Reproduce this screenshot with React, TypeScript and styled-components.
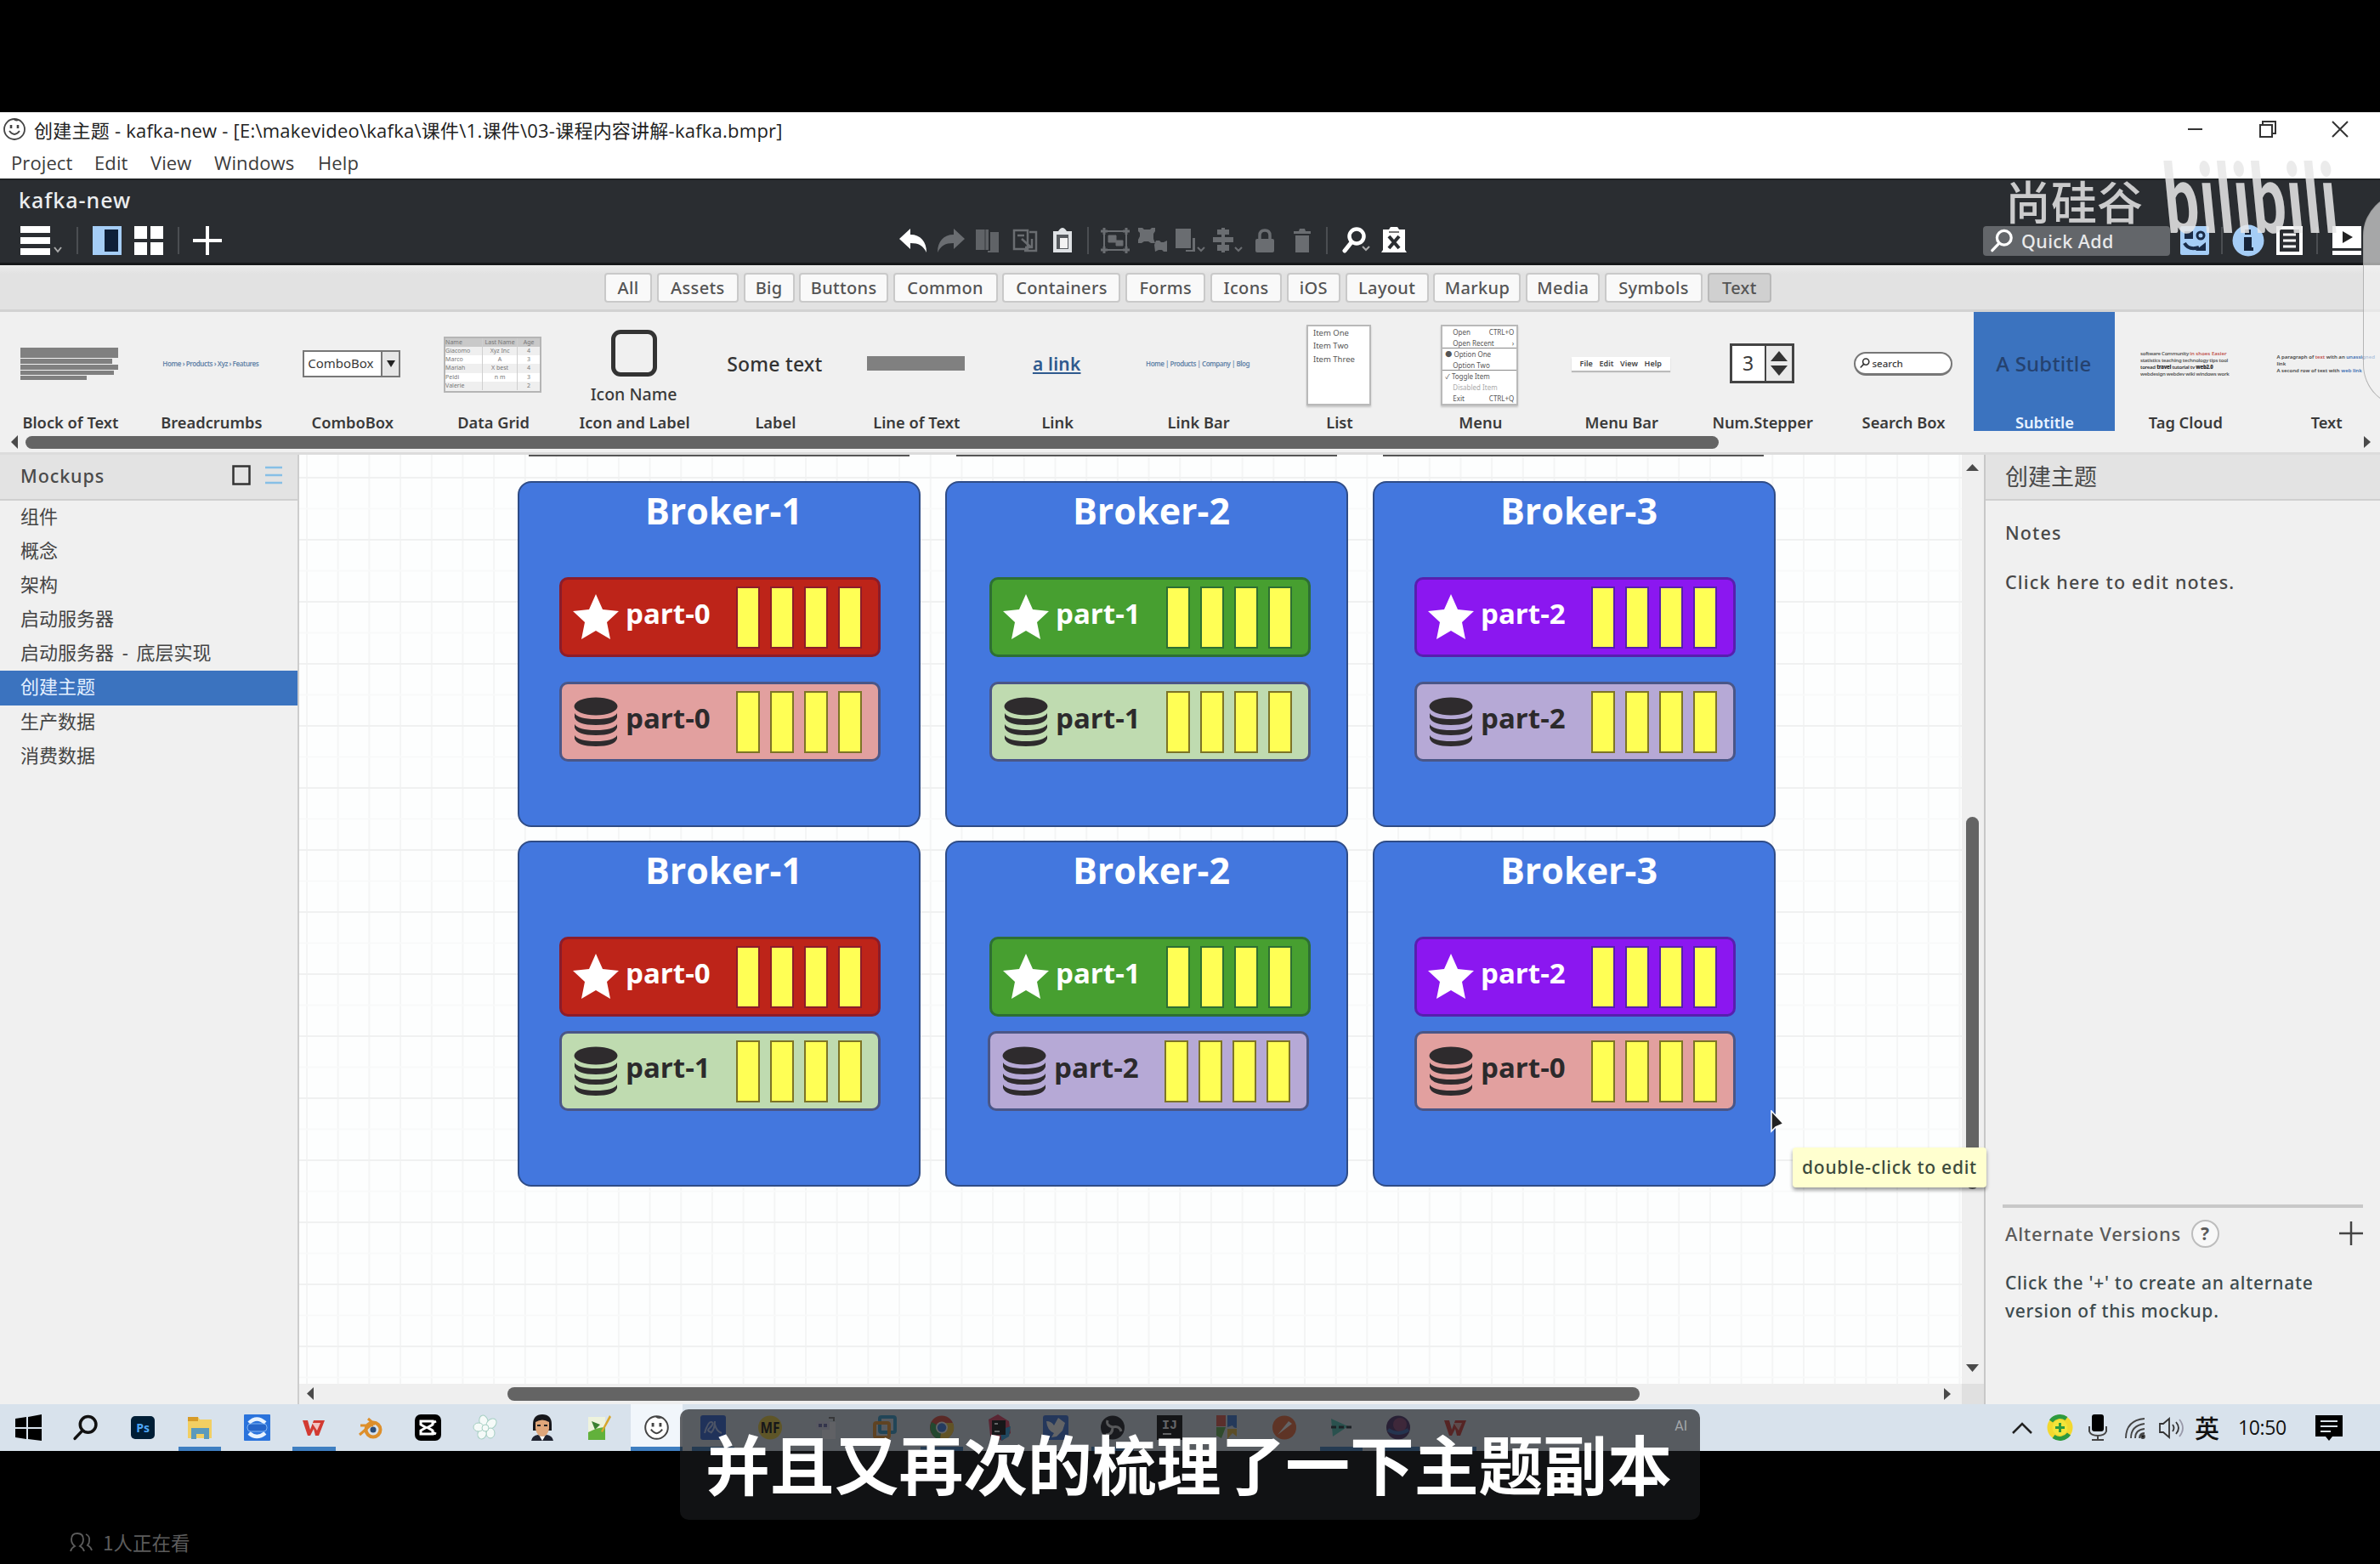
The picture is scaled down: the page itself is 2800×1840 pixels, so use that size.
import React from "react";
import styled, { createGlobalStyle, css } from "styled-components";

const GlobalStyle = createGlobalStyle`
  html, body { margin: 0; padding: 0; background: #000; }
  * { box-sizing: border-box; }
  svg { display: block; flex: none; }
`;

const ui = `"Noto Sans", "Noto Sans CJK SC", sans-serif`;
const segoe = `"Open Sans", "Noto Sans CJK SC", sans-serif`;

/* ---------- page shell ---------- */

const Stage = styled.div`
  position: relative;
  width: 2800px;
  height: 1840px;
  overflow: hidden;
  background: #000;
  display: flex;
  flex-direction: column;
  font-family: ${ui};
  color: #3c3c3c;
  white-space: nowrap;
`;

const Letterbox = styled.div`
  height: 132px;
  flex: none;
`;

/* ---------- title and menus ---------- */

const TitleBar = styled.header`
  height: 42px;
  flex: none;
  background: #fff;
  display: flex;
  align-items: center;
  padding: 0 0 2px 3px;
  gap: 9px;
  font-family: ${segoe};
  font-size: 22px;
  color: #222;
`;

const TitleText = styled.span`
  flex: 1;
  letter-spacing: 0.24px;
`;

const WindowButtons = styled.div`
  display: flex;
  align-items: center;
  gap: 65px;
  padding-right: 37px;
`;

const MenuBar = styled.nav`
  height: 36px;
  flex: none;
  background: #fff;
  display: flex;
  align-items: center;
  gap: 25px;
  padding: 0 0 2px 13px;
  font-family: ${segoe};
  font-size: 22px;
  letter-spacing: 0.1px;
  color: #3c3c3c;
`;

const MenuEntry = styled.span<{ $w: number }>`
  width: ${(p) => p.$w}px;
`;

/* ---------- dark toolbar ---------- */

const DarkBar = styled.div`
  height: 102px;
  flex: none;
  background: #2a2d31;
  border-bottom: 3px solid #16181a;
  border-top: 2px solid #1f2224;
  display: flex;
  flex-direction: column;
`;

const ProjectName = styled.div`
  height: 47px;
  line-height: 46px;
  padding-left: 22px;
  font-size: 25px;
  font-weight: 500;
  letter-spacing: 1px;
  color: #eceeef;
`;

const ToolRow = styled.div`
  height: 48px;
  display: flex;
  align-items: center;
  position: relative;
`;

const ToolSide = styled.div<{ $w: number }>`
  width: ${(p) => p.$w}px;
  display: flex;
  align-items: center;
  padding-left: 24px;
`;

const ToolCell = styled.div<{ $w?: number }>`
  width: ${(p) => p.$w ?? 44}px;
  height: 40px;
  display: flex;
  align-items: center;
  justify-content: center;
`;

const Divider = styled.i<{ $l?: number; $r?: number }>`
  width: 2px;
  height: 32px;
  background: #4b4e52;
  margin-left: ${(p) => p.$l ?? 0}px;
  margin-right: ${(p) => p.$r ?? 0}px;
`;

const Gap = styled.span<{ $w: number }>`
  width: ${(p) => p.$w}px;
  flex: none;
`;

const QuickAdd = styled.div`
  width: 220px;
  height: 35px;
  border-radius: 4px;
  background: #63666a;
  display: flex;
  align-items: center;
  padding-left: 8px;
  gap: 9px;
  font-size: 21.5px;
  font-weight: 500;
  letter-spacing: 0.4px;
  color: #e9eaeb;
`;

/* ---------- category tabs ---------- */

const TabBar = styled.div`
  height: 55px;
  flex: none;
  background: linear-gradient(#ececec, #e2e2e2 10px);
  border-bottom: 3px solid #d2d2d2;
  display: flex;
  align-items: flex-start;
  gap: 5.8px;
  padding: 9px 0 0 711px;
`;

const Tab = styled.span<{ $w: number; $on?: boolean }>`
  width: ${(p) => p.$w}px;
  height: 35px;
  border-radius: 4px;
  border: 2px solid #c9c9c9;
  background: ${(p) => (p.$on ? "#d0d0d0" : "#f9f9f9")};
  ${(p) => p.$on && css`border-color: #b9b9b9;`}
  font-size: 20px;
  font-weight: 500;
  letter-spacing: 0.35px;
  line-height: 31px;
  text-align: center;
  color: #555;
`;

/* ---------- control library ---------- */

const Library = styled.section`
  height: 168px;
  flex: none;
  background: #f0f0f0;
  border-bottom: 3px solid #dcdcdc;
  overflow: hidden;
`;

const Shelf = styled.div`
  height: 141px;
  display: flex;
`;

const Item = styled.div<{ $on?: boolean }>`
  width: 165.9px;
  height: 140px;
  flex: none;
  background: ${(p) => (p.$on ? "#3b73bf" : "transparent")};
  color: ${(p) => (p.$on ? "#e8f2ff" : "#3a3a3a")};
  display: flex;
  flex-direction: column;
  align-items: center;
`;

const Preview = styled.div`
  height: 121px;
  width: 100%;
  padding-right: 2px;
  display: flex;
  align-items: center;
  justify-content: center;
`;

const ItemLabel = styled.div`
  height: 18px;
  line-height: 18px;
  font-size: 18.3px;
  font-weight: 600;
  letter-spacing: 0;
`;

const Lines = styled.div`
  width: 115px;
  display: flex;
  flex-direction: column;
  gap: 1px;
`;

const GreyLine = styled.i<{ $w: number; $h?: number }>`
  width: ${(p) => p.$w}px;
  height: ${(p) => p.$h ?? 6}px;
  background: #808080;
`;

const Tiny = styled.span<{ $c?: string; $s?: number; $ls?: number }>`
  font-size: ${(p) => p.$s ?? 8}px;
  line-height: 1;
  font-weight: 600;
  color: ${(p) => p.$c ?? "#6484a8"};
  letter-spacing: ${(p) => p.$ls ?? 0}px;
`;

const Combo = styled.div`
  width: 115px;
  height: 32px;
  border: 2px solid #777;
  background: #fff;
  display: flex;
  align-items: stretch;
  font-size: 15px;
  line-height: 27px;
  padding-left: 4px;
  justify-content: space-between;
`;

const ComboArrow = styled.i`
  width: 21px;
  border-left: 2px solid #777;
  background: #e6e6e6;
  display: flex;
  align-items: center;
  justify-content: center;
`;

const Grid = styled.div`
  width: 115px;
  height: 66px;
  margin-top: 2px;
  border: 2px solid #b5b5b5;
  display: grid;
  grid-template-columns: 43px 41px 1fr;
  grid-template-rows: repeat(6, 1fr);
`;

const GridCell = styled.span<{ $head?: boolean; $alt?: boolean; $first?: boolean }>`
  font-size: 7px;
  line-height: 10px;
  overflow: hidden;
  text-align: ${(p) => (p.$first ? "left" : "center")};
  color: #777;
  border-left: ${(p) => (p.$first ? "none" : "1px solid #cfcfcf")};
  background: ${(p) => (p.$head ? "#c9c9c9" : p.$alt ? "#efefef" : "#fff")};
`;

const IconAndName = styled.div`
  display: flex;
  flex-direction: column;
  align-items: center;
  gap: 8px;
  font-size: 19.5px;
  font-weight: 500;
  line-height: 26px;
  padding-top: 10px;
`;

const RoundSquare = styled.i`
  width: 54px;
  height: 55px;
  border: 5px solid #333;
  border-radius: 11px;
`;

const BigText = styled.span<{ $c?: string; $link?: boolean; $s?: number }>`
  font-size: ${(p) => p.$s ?? 23}px;
  color: ${(p) => p.$c ?? "#333"};
  font-weight: ${(p) => (p.$link ? 600 : 500)};
  text-decoration: ${(p) => (p.$link ? "underline" : "none")};
  letter-spacing: 0.2px;
`;

const Sheet = styled.div<{ $w: number }>`
  width: ${(p) => p.$w}px;
  height: 95px;
  background: #fff;
  border: 2px solid #b9b9b9;
  box-shadow: 0 2px 2px #c4c4c4;
  display: flex;
  flex-direction: column;
  margin-top: 3px;
`;

const SheetRow = styled.div<{ $rule?: boolean; $c?: string; $h: number; $s: number; $l: number }>`
  height: ${(p) => p.$h}px;
  line-height: ${(p) => p.$h}px;
  font-size: ${(p) => p.$s}px;
  padding: 0 3px 0 ${(p) => p.$l}px;
  display: flex;
  justify-content: space-between;
  color: ${(p) => p.$c ?? "#555"};
  border-bottom: ${(p) => (p.$rule ? "1px solid #888" : "none")};
`;

const Strip = styled.div`
  width: 116px;
  height: 16px;
  background: #fff;
  box-shadow: 0 2px 1px #bbb;
  display: flex;
  align-items: center;
  justify-content: space-around;
  padding: 0 6px;
`;

const Stepper = styled.div`
  width: 76px;
  height: 47px;
  border: 3px solid #444;
  background: #fff;
  display: flex;
  font-size: 23px;
  line-height: 40px;
  text-align: center;
`;

const StepperValue = styled.span`
  flex: 1;
`;

const StepperArrows = styled.i`
  width: 32px;
  border-left: 2px solid #444;
  background: #e9e9e9;
  display: flex;
  flex-direction: column;
  align-items: center;
  justify-content: center;
  gap: 5px;
`;

const SearchPill = styled.div`
  width: 116px;
  height: 28px;
  border-radius: 14px;
  border: 2px solid #777;
  border-bottom-width: 3px;
  background: #fff;
  display: flex;
  align-items: center;
  gap: 3px;
  padding-left: 5px;
  font-size: 11.5px;
  font-weight: 500;
`;

const Cloud = styled.div`
  display: flex;
  flex-direction: column;
  gap: 2px;
  align-items: flex-start;
`;

const ShelfScroll = styled.div`
  height: 24px;
  display: flex;
  align-items: center;
  padding: 0 11px 0 13px;
  justify-content: space-between;
`;

const ShelfThumb = styled.i`
  width: 1992px;
  height: 15px;
  border-radius: 8px;
  background: #646464;
  margin: 1px auto 0 9px;
`;

/* ---------- workspace ---------- */

const Workspace = styled.main`
  height: 1117px;
  flex: none;
  display: flex;
  background: #f0f0f0;
`;

const Sidebar = styled.aside`
  width: 352px;
  border-right: 2px solid #cdcdcd;
`;

const PanelHead = styled.div<{ $pad: number; $size: number }>`
  height: 54px;
  background: #e3e3e3;
  border-bottom: 2px solid #cfcfcf;
  display: flex;
  align-items: center;
  padding: 0 18px 4px ${(p) => p.$pad}px;
  font-size: ${(p) => p.$size}px;
  font-weight: 500;
  color: #4a4a4a;
`;

const HeadTitle = styled.span`
  flex: 1;
  letter-spacing: 0.9px;
`;

const HeadTitleCjk = styled.span`
  font-weight: 400;
`;

const MockupList = styled.div`
  display: flex;
  flex-direction: column;
`;

const MockupRow = styled.div<{ $on?: boolean }>`
  height: 40.1px;
  line-height: 37px;
  padding-left: 24px;
  font-size: 22px;
  word-spacing: 4px;
  color: ${(p) => (p.$on ? "#e4f0ff" : "#444")};
  background: ${(p) => (p.$on ? "#3b73bf" : "transparent")};
`;

const CanvasColumn = styled.div`
  width: 1984px;
  display: flex;
  flex-direction: column;
  border-right: 2px solid #c8c8c8;
`;

const CanvasRow = styled.div`
  height: 1093px;
  display: flex;
`;

const Canvas = styled.div`
  width: 1956px;
  position: relative;
  overflow: hidden;
  background-color: #fdfefe;
  background-image: linear-gradient(#f0f1f1 2px, transparent 2px), linear-gradient(#f8f9f9 2px, transparent 2px),
    linear-gradient(90deg, #f4f5f5 2px, transparent 2px);
  background-size: 100% 73px, 100% 36.5px, 36.7px 100%;
  background-position: 0 26px, 0 26px, 8px 0;
`;

const CutEdge = styled.i<{ $x: number }>`
  position: absolute;
  left: ${(p) => p.$x}px;
  top: 0;
  width: 448px;
  height: 2px;
  background: #555;
`;

const Broker = styled.div<{ $x: number; $y: number }>`
  position: absolute;
  left: ${(p) => p.$x}px;
  top: ${(p) => p.$y}px;
  width: 474px;
  height: 407px;
  border: 2px solid #2f4c86;
  border-radius: 16px;
  background: #4377de;
`;

const BrokerTitle = styled.div`
  margin-top: 3px;
  padding-left: 11px;
  text-align: center;
  font-family: ${segoe};
  font-weight: 700;
  font-size: 43px;
  line-height: 60px;
  color: #fff;
`;

const Part = styled.div<{ $x: number; $y: number; $bg: string; $edge: string }>`
  position: absolute;
  left: ${(p) => p.$x}px;
  top: ${(p) => p.$y}px;
  width: 378px;
  height: 94px;
  border: 3px solid ${(p) => p.$edge};
  border-radius: 10px;
  background: ${(p) => p.$bg};
  display: flex;
  align-items: center;
  padding-left: 12px;
`;

const PartName = styled.span<{ $dark?: boolean }>`
  width: 137px;
  padding-left: 7px;
  padding-bottom: 9px;
  font-family: ${segoe};
  font-weight: 700;
  font-size: 33px;
  line-height: 40px;
  color: ${(p) => (p.$dark ? "#2c2a2c" : "#fff")};
`;

const Bars = styled.div`
  display: flex;
  gap: 12px;
`;

const Bar = styled.i<{ $edge: string }>`
  width: 28px;
  height: 73px;
  border: 2px solid ${(p) => p.$edge};
  background: #ffff55;
`;

const VTrack = styled.div`
  width: 26px;
  background: #efefef;
  display: flex;
  flex-direction: column;
  align-items: center;
  padding: 11px 2px 14px 0;
`;

const VThumb = styled.i`
  width: 15px;
  height: 438px;
  margin-top: 407px;
  margin-bottom: auto;
  border-radius: 8px;
  background: #646464;
`;

const HTrack = styled.div`
  height: 24px;
  background: #efefef;
  display: flex;
  align-items: center;
  padding: 0 0 1px 9px;
`;

const HThumb = styled.i`
  width: 1332px;
  height: 16px;
  margin: 0 358px 0 228px;
  border-radius: 8px;
  background: #646464;
`;

const Corner = styled.i`
  width: 26px;
  height: 24px;
  background: #e0e0e0;
  margin-left: auto;
`;

const Floating = styled.div<{ $x: number; $y: number }>`
  position: absolute;
  left: ${(p) => p.$x}px;
  top: ${(p) => p.$y}px;
`;

const Tooltip = styled(Floating)`
  width: 228px;
  height: 47px;
  background: #ffffcf;
  border-radius: 4px;
  box-shadow: 0 3px 4px rgba(0, 0, 0, 0.4);
  text-align: center;
  line-height: 47px;
  font-size: 21px;
  font-weight: 500;
  letter-spacing: 0.75px;
  color: #3c4a3c;
`;

const Inspector = styled.aside`
  flex: 1;
  display: flex;
  flex-direction: column;
`;

const Notes = styled.div`
  flex: 1;
  padding: 20px 0 0 23px;
  font-size: 21.5px;
  font-weight: 500;
  letter-spacing: 1.15px;
  line-height: 36px;
  color: #484848;
  display: flex;
  flex-direction: column;
  gap: 22px;
`;

const Alternates = styled.div`
  height: 235px;
  margin: 0 20px 0 20px;
  border-top: 4px solid #c8c8c8;
  padding: 12px 0 0 3px;
  font-size: 21px;
  font-weight: 500;
  letter-spacing: 0.75px;
  line-height: 33px;
  color: #3d4b4e;
`;

const AltHead = styled.div`
  display: flex;
  align-items: center;
  gap: 12px;
  height: 36px;
  margin-bottom: 24px;
  font-size: 22px;
  color: #5a5a5a;
`;

const Help = styled.span`
  width: 33px;
  height: 33px;
  border-radius: 50%;
  border: 2px solid #bdbdbd;
  background: #f8f8f8;
  text-align: center;
  line-height: 28px;
  font-size: 21px;
  font-weight: 700;
  margin-right: auto;
`;

/* ---------- taskbar ---------- */

const Taskbar = styled.footer`
  height: 55px;
  flex: none;
  background: #d8e2ec;
  display: flex;
  align-items: stretch;
  color: #111;
`;

const Task = styled.div<{ $on?: boolean }>`
  width: ${(p) => (p.$on ? 61 : 67.15)}px;
  margin: 0 ${(p) => (p.$on ? 3 : 0)}px;
  background: ${(p) => (p.$on ? "#f1f6fb" : "transparent")};
  display: flex;
  flex-direction: column;
  align-items: center;
  justify-content: space-between;
  padding-top: 12px;
`;

const RunMark = styled.i<{ $w: number }>`
  width: ${(p) => p.$w}px;
  height: 5px;
  background: #3f7fc1;
`;

const Tray = styled.div`
  margin-left: auto;
  display: flex;
  align-items: center;
  padding-right: 44px;
  font-family: ${segoe};
`;

const TrayText = styled.span<{ $s: number; $w: number }>`
  font-size: ${(p) => p.$s}px;
  width: ${(p) => p.$w}px;
  margin-right: 22px;
  padding-bottom: 1px;
  font-weight: ${(p) => (p.$s > 25 ? 500 : 400)};
  letter-spacing: -0.4px;
`;

/* ---------- player overlays ---------- */

const Uploader = styled(Floating)`
  font-family: "Noto Sans CJK SC", sans-serif;
  font-size: 54px;
  line-height: 60px;
  font-weight: 500;
  color: rgba(232, 232, 232, 0.85);
`;

const SiteMark = styled(Floating)`
  font-family: Lato, sans-serif;
  font-weight: 900;
  font-size: 114px;
  line-height: 112px;
  letter-spacing: 3px;
  color: rgba(232, 232, 232, 0.86);
  transform-origin: 0 0;
  transform: scaleX(0.62) skewX(9deg);
`;

const Drawer = styled(Floating)`
  width: 100px;
  height: 252px;
  border-radius: 58px;
  border: 1px solid rgba(140, 140, 140, 0.6);
  background: rgba(242, 242, 242, 0.62);
`;

const Caption = styled(Floating)`
  width: 1200px;
  height: 130px;
  border-radius: 10px;
  background: rgba(25, 26, 29, 0.68);
  text-align: center;
  font-family: "Noto Sans CJK SC", sans-serif;
  font-size: 75.8px;
  font-weight: 700;
  line-height: 125px;
  text-indent: -3px;
  color: #fff;
`;

const AiTag = styled.span`
  position: absolute;
  right: 15px;
  top: 12px;
  text-indent: 0;
  font-family: Roboto, sans-serif;
  font-size: 16px;
  line-height: 16px;
  font-weight: 400;
  color: #a4a7ab;
`;

const Viewers = styled(Floating)`
  display: flex;
  align-items: center;
  gap: 12px;
  height: 30px;
  font-family: "Noto Sans CJK SC", sans-serif;
  font-size: 22.5px;
  line-height: 30px;
  color: #5c5c5c;
`;

/* ---------- drawings ---------- */

const Smiley = ({ s = 28 }: { s?: number }) => (
  <svg width={s} height={s} viewBox="0 0 28 28" fill="none" stroke="#444" strokeWidth="1.800">
    <circle cx="14" cy="14" r="12" fill="#fff" />
    <path d="M8 16q6 8 12 0" />
    <path d="M10 9v4M18 9v4" strokeWidth="2.6" />
    <path d="M13 2q3 3 6 1" strokeWidth="1.5" />
  </svg>
);

const Arrow = ({ d, w = 9, h = 15, c = "#4a4a4a" }: { d: "l" | "r" | "u" | "d"; w?: number; h?: number; c?: string }) => {
  const pts = {
    l: `${w},0 0,${h / 2} ${w},${h}`,
    r: `0,0 ${w},${h / 2} 0,${h}`,
    u: `0,${h} ${w / 2},0 ${w},${h}`,
    d: `0,0 ${w / 2},${h} ${w},0`,
  }[d];
  return (
    <svg width={w} height={h}>
      <polygon points={pts} fill={c} />
    </svg>
  );
};

const Lens = ({ s = 30, c = "#fff", w = 4 }: { s?: number; c?: string; w?: number }) => (
  <svg width={s} height={s} viewBox="0 0 30 30" fill="none" stroke={c} strokeWidth={w} strokeLinecap="round">
    <circle cx="18" cy="11.5" r="9" />
    <path d="M11.5 18.500L3 27.500" />
  </svg>
);

const Star = () => (
  <svg width="56" height="56" viewBox="0 0 56 56">
    <polygon points="28,1 36,19 55,21 41,34 45,54 28,44 11,54 15,34 1,21 20,19" fill="#fff" />
  </svg>
);

const Disks = () => (
  <svg width="56" height="60" viewBox="0 0 56 60" fill="#2e2b2d">
    <ellipse cx="28" cy="12" rx="25.500" ry="10.500" />
    <path d="M3 20q4 7 25 7t25-7v5q-3 9-25 9T3 25z" />
    <path d="M3 33q4 7 25 7t25-7v4q-3 9-25 9T3 37z" />
    <path d="M3 46q4 7 25 7t25-7v4q-3 9-25 9T3 50z" />
  </svg>
);

const g = "#6a6d71";

const Undo = ({ c, flip }: { c: string; flip?: boolean }) => (
  <svg width="33" height="28" viewBox="0 0 33 28">
    <path transform={flip ? "translate(33 0) scale(-1 1)" : undefined} fill={c} d="M0 12L13 0v7c12 0 19 8 19 21c-4-8-9-11-19-11v7z" />
  </svg>
);

const centerTools: (React.ReactNode | null)[][] = [
  [
    <Undo c="#fff" />,
    <Undo c={g} flip />,
    <svg width="30" height="28" viewBox="0 0 30 28" fill={g}><rect x="1" y="1" width="15" height="24" fillOpacity=".85" /><path d="M18 4h10v24H15v-2h3z" fillOpacity=".85" /><path d="M12 1v24" stroke="#4a4d51" strokeWidth="2" /></svg>,
    <svg width="30" height="28" viewBox="0 0 30 28" fill="none" stroke={g} strokeWidth="2.500"><rect x="2" y="2" width="16" height="22" /><path d="M20 4h8v22H14M6 8h8M11 12l11 10M23 12v10h-8" /></svg>,
    <svg width="24" height="30" viewBox="0 0 24 30"><path d="M1 4h6q5-8 10 0h6v25H1z" fill="#dfe2e5" /><path d="M5 8h14v17H5z" fill="#565a5e" /><rect x="9" y="12" width="9" height="12" fill="#f2f2f2" /></svg>,
  ],
  [
    <svg width="34" height="30" viewBox="0 0 34 30" fill="none" stroke={g} strokeWidth="3"><rect x="4" y="4" width="26" height="22" strokeWidth="2" /><path d="M0 4h8M4 0v8M26 4h8M30 0v8M0 26h8M4 22v8M26 26h8M30 22v8" /><path d="M9 9h9v8H9zM18 15h8v6h-8z" fill={g} strokeWidth="1" /></svg>,
    <svg width="34" height="30" viewBox="0 0 34 30" fill={g}><path d="M0 0h5l2 2h7l2-2h4v4l-2 3v6l2 5h-5l-3-2H7l-3 2H0v-4l2-4V6L0 4zM21 15h4l2 2h3l4-2v13h-4l-2-2h-4l-4 2-1-8z" /></svg>,
    <svg width="36" height="30" viewBox="0 0 36 30" fill={g}><rect x="1" y="1" width="18" height="23" /><path d="M21 12h3v16H13v-2h8z" /><path d="M27 23l4 4 4-4" fill="none" stroke={g} strokeWidth="2" /></svg>,
    <svg width="36" height="30" viewBox="0 0 36 30" fill={g}><path d="M6 2h14v6H6zM1 11h24v6H1zM6 20h14v7H6zM11 0h4v29h-4z" /><path d="M27 23l4 4 4-4" fill="none" stroke={g} strokeWidth="2" /></svg>,
    <svg width="24" height="30" viewBox="0 0 24 30" fill={g}><rect x="1" y="13" width="22" height="16" rx="2" /><path d="M6 14V9q0-6 6-6t6 6v5" fill="none" stroke={g} strokeWidth="3.500" /></svg>,
    <svg width="22" height="30" viewBox="0 0 22 30" fill={g}><path d="M1 4h6l1-3h6l1 3h6v3H1zM3 9h16v20H3z" /></svg>,
  ],
  [
    <svg width="34" height="32" viewBox="0 0 34 32" fill="none" stroke="#fff"><circle cx="17" cy="11" r="8.500" strokeWidth="4.500" /><path d="M11 18L3 28" strokeWidth="5" strokeLinecap="round" /><path d="M24 23l4 4 4-4" strokeWidth="2" stroke="#aaa" /></svg>,
    <svg width="30" height="32" viewBox="0 0 30 32"><path d="M2 3h7l2-3h8l2 3h7v24l2 3H0l2-3z" fill="#fff" /><path d="M9 11l12 14M21 11L9 25" stroke="#2a2d31" strokeWidth="4" /><path d="M9 6h12" stroke="#777" strokeWidth="2" /></svg>,
  ],
];

const taskIcons: React.ReactNode[] = [
  <svg width="31" height="31" viewBox="0 0 31 31"><path d="M0 5l13-2v12H0zM15 3l16-3v15H15zM0 17h13v12L0 27zM15 17h16v14l-16-2z" fill="#000" /></svg>,
  <Lens s={31} c="#111" w={3.4} />,
  <svg width="28" height="31" viewBox="0 0 28 31"><rect y="2" width="28" height="27" rx="5" fill="#001e36" /><text x="14" y="21" fill="#4da6f5" fontSize="14" fontWeight="700" textAnchor="middle" fontFamily="Open Sans">Ps</text></svg>,
  <svg width="30" height="31" viewBox="0 0 30 31"><path d="M1 3h12l2 3h14v22H1z" fill="#f2cf62" /><path d="M1 3h12v5H1z" fill="#d79b28" /><path d="M5 16h21v13h-6v-6h-9v6H5z" fill="#5b9abb" /></svg>,
  <svg width="31" height="31" viewBox="0 0 31 31"><rect width="31" height="31" rx="1" fill="#2a73dc" /><path d="M6 10q9-9 19 0M6 22q9 8 19 0" stroke="#e8f3ff" strokeWidth="4.500" fill="none" /><rect x="4" y="11" width="23" height="9" rx="4" fill="#2565c9" stroke="#7fb4f3" /></svg>,
  <svg width="30" height="31" viewBox="0 0 30 31"><path d="M2 7h6l3 11 4-11h13l-7 18h-4l-2-8-4 8H8z" fill="#d23a32" /><path d="M13 10h10l-4 9z" fill="#fff" opacity=".7" /></svg>,
  <svg width="30" height="31" viewBox="0 0 30 31" fill="none"><circle cx="18" cy="18" r="8.500" stroke="#dd8f2b" strokeWidth="4" /><circle cx="18" cy="18" r="3.500" fill="#2b4d78" /><path d="M2 24l15-13M3 13h15M12 5l8 7" stroke="#dd8f2b" strokeWidth="3" /></svg>,
  <svg width="31" height="31" viewBox="0 0 31 31"><rect width="31" height="31" rx="7" fill="#000" /><path d="M7 8h14v4l-6 3.500 6 3.500v4H7v-4l6-3.500L7 12zM21 10l4-2M21 21l4 2" fill="none" stroke="#fff" strokeWidth="3" /></svg>,
  <svg width="30" height="31" viewBox="0 0 30 31" fill="#f5faf8" stroke="#a5cfc2" strokeWidth="1"><ellipse cx="13" cy="8" rx="5" ry="7" transform="rotate(-15 13 8)" /><ellipse cx="22" cy="11" rx="5" ry="7" transform="rotate(45 22 11)" /><ellipse cx="21" cy="22" rx="5" ry="6" /><ellipse cx="11" cy="23" rx="5" ry="6" transform="rotate(20 11 23)" /><ellipse cx="7" cy="15" rx="6" ry="5" /><circle cx="15" cy="16" r="4" /></svg>,
  <svg width="28" height="31" viewBox="0 0 28 31"><path d="M3 12q0-12 11-12t11 12v7H3z" fill="#17171b" /><path d="M6 9q8-5 16 0v8q-2 9-8 9t-8-9z" fill="#dfa67a" /><path d="M1 31q1-6 8-7l5 4 5-4q7 1 8 7z" fill="#1e2230" /><path d="M11 26h6l-3 5z" fill="#fff" /><path d="M8 13h4M16 13h4" stroke="#222" strokeWidth="2" /></svg>,
  <svg width="30" height="31" viewBox="0 0 30 31"><path d="M2 3h20v27H2z" fill="#62b13b" /><path d="M2 3h20v12q-9 0-20 6z" fill="#eef3dc" /><path d="M6 8l4 10 6-6z" fill="#3a7f31" /><path d="M17 20L27 1l2 2-10 18z" fill="#d7a62b" /></svg>,
  <Smiley s={31} />,
  <svg width="30" height="31" viewBox="0 0 30 31"><rect y="1" width="30" height="29" rx="3" fill="#2f63d8" /><path d="M5 22q4-14 8-13t-2 7q-5 4 3 5M17 8q0 10-5 14M17 12q2 8 8 10" stroke="#b9ceff" strokeWidth="2" fill="none" /></svg>,
  <svg width="30" height="31" viewBox="0 0 30 31"><circle cx="15" cy="15.500" r="14" fill="#f0cf3c" /><text x="15" y="22" fontSize="17" fontWeight="700" textAnchor="middle" fontFamily="Open Sans" textLength="23" lengthAdjust="spacingAndGlyphs" fill="#111">MF</text></svg>,
  <svg width="30" height="31" viewBox="0 0 30 31"><path d="M9 9h16v20H9z" fill="#f4f4fa" /><rect x="2" y="8" width="16" height="10" fill="#dcdcf0" /><path d="M5 11h4v4H5zM11 11h4v4h-4z" fill="#6d6fae" /><path d="M17 4h6v4" stroke="#777" fill="none" strokeWidth="2" /></svg>,
  <svg width="30" height="31" viewBox="0 0 30 31" fill="none" strokeWidth="4"><rect x="9" y="3" width="18" height="18" rx="2" stroke="#33a0cf" /><rect x="3" y="10" width="17" height="17" rx="2" stroke="#f29a2e" /></svg>,
  <svg width="30" height="31" viewBox="0 0 30 31"><circle cx="15" cy="15.500" r="14" fill="#e2473a" /><path d="M15 15.500L3 9a14 14 0 0 0 10 20.500z" fill="#3aa757" /><path d="M15 15.500l-2 14A14 14 0 0 0 28 10H15z" fill="#f7c938" /><circle cx="15" cy="15.500" r="7" fill="#fff" /><circle cx="15" cy="15.500" r="5.200" fill="#4080ea" /></svg>,
  <svg width="30" height="31" viewBox="0 0 30 31"><path d="M3 6L14 0l13 8 2 14-10 9-14-6z" fill="#e23e62" /><path d="M17 18l12-4-2 12-9 5z" fill="#2da6e8" /><rect x="7" y="7" width="16" height="17" fill="#111" /><path d="M10 11h4M10 20h6" stroke="#fff" strokeWidth="2" /></svg>,
  <svg width="30" height="31" viewBox="0 0 30 31"><rect y="1" width="30" height="29" rx="3" fill="#3b74dd" /><path d="M4 8q6 0 9 5l5-9 8 6-3 9-7 7-6 1 3-5q-8-3-9-14z" fill="#fff" /></svg>,
  <svg width="30" height="31" viewBox="0 0 30 31"><circle cx="15" cy="15.500" r="14" fill="#1b1b1f" /><path d="M15 15q-8-2-6-8M15 15q8-2 10 5M15 15q0 9-8 9" stroke="#d8d8d8" strokeWidth="3" fill="none" /></svg>,
  <svg width="30" height="31" viewBox="0 0 30 31"><rect y="1" width="30" height="29" fill="#0a0a0a" /><text x="6" y="17" fill="#fff" fontSize="15" fontWeight="700" fontFamily="Liberation Mono">IJ</text><path d="M7 23h10" stroke="#fff" strokeWidth="2" /></svg>,
  <svg width="30" height="31" viewBox="0 0 30 31"><path d="M3 1h11v13H3z" fill="#e65a4d" /><path d="M16 1h11v15q-4 0-5-3l-6 2z" fill="#3c79d8" /><path d="M3 15h11l-5 13-6-3z" fill="#62ad4c" /><path d="M16 17h11v9l-5-4-6 7z" fill="#e8b93d" /></svg>,
  <svg width="30" height="31" viewBox="0 0 30 31"><circle cx="15" cy="15.500" r="14" fill="#ee6a38" /><path d="M7 24l13-16 4 3z" fill="#fff" /></svg>,
  <svg width="32" height="31" viewBox="0 0 32 31"><path d="M4 5l20 9-18 12z" fill="#4ec5b4" /><path d="M4 15h26" stroke="#26323a" strokeWidth="3" strokeDasharray="6 3" /></svg>,
  <svg width="30" height="31" viewBox="0 0 30 31"><circle cx="15" cy="15.500" r="14" fill="#4a2c66" /><circle cx="17" cy="12" r="8" fill="#8d4676" /><path d="M3 18q12 8 24 0" stroke="#3d69b8" strokeWidth="4" fill="none" /></svg>,
  <svg width="30" height="31" viewBox="0 0 30 31"><path d="M2 7h6l3 11 4-11h13l-7 18h-4l-2-8-4 8H8z" fill="#d23a32" /><path d="M13 10h10l-4 9z" fill="#fff" opacity=".6" /></svg>,
];

/* ---------- data ---------- */

const tabs: [string, number][] = [
  ["All", 56], ["Assets", 96], ["Big", 60], ["Buttons", 104.500], ["Common", 123], ["Containers", 139],
  ["Forms", 94], ["Icons", 84], ["iOS", 63], ["Layout", 98], ["Markup", 103], ["Media", 87],
  ["Symbols", 115], ["Text", 75],
];

const mockups = ["组件", "概念", "架构", "启动服务器", "启动服务器 - 底层实现", "创建主题", "生产数据", "消费数据"];

const gridRows = [
  ["Name", "Last Name", "Age"],
  ["Giacomo", "Xyz Inc", "4"],
  ["Marco", "A", "3"],
  ["Mariah", "X best", "4"],
  ["Peldi", "n m", "3"],
  ["Valerie", "", "2"],
];

const library: { label: string; view: React.ReactNode; on?: boolean }[] = [
  { label: "Block of Text", view: <Lines><GreyLine $w={115} $h={12} /><GreyLine $w={108} /><GreyLine $w={115} /><GreyLine $w={110} $h={5} /><GreyLine $w={78} $h={5} /></Lines> },
  { label: "Breadcrumbs", view: <Tiny $ls={-0.4}>Home › Products › Xyz › Features</Tiny> },
  { label: "ComboBox", view: <Combo>ComboBox<ComboArrow><Arrow d="d" w={10} h={8} c="#222" /></ComboArrow></Combo> },
  {
    label: "Data Grid",
    view: (
      <Grid>
        {gridRows.flatMap((r, i) => r.map((t, j) => <GridCell key={`${i}${j}`} $head={i === 0} $alt={i % 2 === 1} $first={j === 0}>{t}</GridCell>))}
      </Grid>
    ),
  },
  { label: "Icon and Label", view: <IconAndName><RoundSquare />Icon Name</IconAndName> },
  { label: "Label", view: <BigText>Some text</BigText> },
  { label: "Line of Text", view: <GreyLine $w={115} $h={17} /> },
  { label: "Link", view: <BigText $c="#2f5a8e" $link $s={21}>a link</BigText> },
  { label: "Link Bar", view: <Tiny $ls={-0.5}>Home | Products | Company | Blog</Tiny> },
  {
    label: "List",
    view: <Sheet $w={76}>{["Item One", "Item Two", "Item Three"].map((t) => <SheetRow key={t} $h={15.500} $s={9.500} $l={6}>{t}</SheetRow>)}</Sheet>,
  },
  {
    label: "Menu",
    view: (
      <Sheet $w={91}>
        <SheetRow $h={13} $s={8} $l={12}><span>Open</span><span>CTRL+O</span></SheetRow>
        <SheetRow $h={13} $s={8} $l={12} $rule><span>Open Recent</span><span>›</span></SheetRow>
        <SheetRow $h={13} $s={8} $l={3}><span>● Option One</span></SheetRow>
        <SheetRow $h={13} $s={8} $l={12} $rule><span>Option Two</span></SheetRow>
        <SheetRow $h={13} $s={8} $l={3}><span>✓ Toggle Item</span></SheetRow>
        <SheetRow $h={13} $s={8} $l={12} $c="#aaa"><span>Disabled Item</span></SheetRow>
        <SheetRow $h={13} $s={8} $l={12}><span>Exit</span><span>CTRL+Q</span></SheetRow>
      </Sheet>
    ),
  },
  { label: "Menu Bar", view: <Strip>{["File", "Edit", "View", "Help"].map((t) => <Tiny key={t} $s={9} $c="#444">{t}</Tiny>)}</Strip> },
  { label: "Num.Stepper", view: <Stepper><StepperValue>3</StepperValue><StepperArrows><Arrow d="u" w={20} h={12} c="#333" /><Arrow d="d" w={20} h={12} c="#333" /></StepperArrows></Stepper> },
  { label: "Search Box", view: <SearchPill><Lens s={12} c="#333" w={4} />search</SearchPill> },
  { label: "Subtitle", on: true, view: <BigText $c="#25426f" $s={24}>A Subtitle</BigText> },
  {
    label: "Tag Cloud",
    view: (
      <Cloud>
        <Tiny $s={6} $ls={-0.25} $c="#555">software Community <Tiny $s={6} $c="#c0504d">in shoes Easier</Tiny></Tiny>
        <Tiny $s={6} $ls={-0.25} $c="#555">statistics teaching technology tips tool</Tiny>
        <Tiny $s={6} $ls={-0.25} $c="#333">toread <b>travel</b> tutorial tv <b>web2.0</b></Tiny>
        <Tiny $s={6} $ls={-0.25} $c="#555">webdesign webdev wiki windows work</Tiny>
      </Cloud>
    ),
  },
  {
    label: "Text",
    view: (
      <Cloud>
        <Tiny $s={6} $c="#444">A paragraph of <Tiny $s={6} $c="#c0504d">text</Tiny> with an <Tiny $s={6} $c="#3a6db0">unassigned</Tiny></Tiny>
        <Tiny $s={6} $c="#444">link</Tiny>
        <Tiny $s={6} $c="#444">A second row of text with <Tiny $s={6} $c="#3a6db0">web link</Tiny></Tiny>
      </Cloud>
    ),
  },
];

type P = { n: number; hue: "r" | "g" | "p"; main?: boolean; x: number; y: number };
const fills = {
  r: { main: "#bd2419", copy: "#e2a09f", edge: "#8c1c2a" },
  g: { main: "#479f30", copy: "#bfdbb0", edge: "#2d6f33" },
  p: { main: "#8b17f0", copy: "#b6a9d6", edge: "#571fae" },
};

const brokers: { n: number; x: number; y: number; parts: P[] }[] = [
  { n: 1, x: 257, y: 31, parts: [{ n: 0, hue: "r", main: true, x: 47, y: 111 }, { n: 0, hue: "r", x: 47, y: 234 }] },
  { n: 2, x: 760, y: 31, parts: [{ n: 1, hue: "g", main: true, x: 50, y: 111 }, { n: 1, hue: "g", x: 50, y: 234 }] },
  { n: 3, x: 1263, y: 31, parts: [{ n: 2, hue: "p", main: true, x: 47, y: 111 }, { n: 2, hue: "p", x: 47, y: 234 }] },
  { n: 1, x: 257, y: 454, parts: [{ n: 0, hue: "r", main: true, x: 47, y: 111 }, { n: 1, hue: "g", x: 47, y: 222 }] },
  { n: 2, x: 760, y: 454, parts: [{ n: 1, hue: "g", main: true, x: 50, y: 111 }, { n: 2, hue: "p", x: 48, y: 222 }] },
  { n: 3, x: 1263, y: 454, parts: [{ n: 2, hue: "p", main: true, x: 47, y: 111 }, { n: 0, hue: "r", x: 47, y: 222 }] },
];

const running: Record<number, number> = { 3: 50, 5: 51, 11: 61, 12: 50, 16: 50, 19: 50, 23: 50, 24: 50, 25: 50 };

const PartBox = ({ p }: { p: P }) => (
  <Part $x={p.x} $y={p.y} $bg={p.main ? fills[p.hue].main : fills[p.hue].copy} $edge={p.main ? fills[p.hue].edge : "#4a5687"}>
    {p.main ? <Star /> : <Disks />}
    <PartName $dark={!p.main}>part-{p.n}</PartName>
    <Bars>
      {[0, 1, 2, 3].map((i) => <Bar key={i} $edge={p.main ? fills[p.hue].edge : "#7d7426"} />)}
    </Bars>
  </Part>
);

export default function App() {
  return (
    <Stage>
      <GlobalStyle />
      <Letterbox />
      <TitleBar>
        <Smiley />
        <TitleText>{"创建主题 - kafka-new - [E:\\makevideo\\kafka\\课件\\1.课件\\03-课程内容讲解-kafka.bmpr]"}</TitleText>
        <WindowButtons>
          <svg width="20" height="20"><path d="M1 10h17" stroke="#333" strokeWidth="2" /></svg>
          <svg width="20" height="20" fill="none" stroke="#333" strokeWidth="2"><rect x="1" y="5" width="14" height="14" /><path d="M4 5V1h15v14h-4" /></svg>
          <svg width="20" height="20"><path d="M1 1l18 18M19 1L1 19" stroke="#333" strokeWidth="2" /></svg>
        </WindowButtons>
      </TitleBar>
      <MenuBar>
        <MenuEntry $w={73}>Project</MenuEntry>
        <MenuEntry $w={41}>Edit</MenuEntry>
        <MenuEntry $w={50}>View</MenuEntry>
        <MenuEntry $w={97}>Windows</MenuEntry>
        <MenuEntry $w={50}>Help</MenuEntry>
      </MenuBar>

      <DarkBar>
        <ProjectName>kafka-new</ProjectName>
        <ToolRow>
          <ToolSide $w={1052}>
            <svg width="50" height="36" viewBox="0 0 50 36"><path d="M0 1h35v8H0zM0 14h35v8H0zM0 27h35v8H0z" fill="#fff" /><path d="M40 26l4 5 4-5" fill="none" stroke="#aaa" strokeWidth="2" /></svg>
            <Divider $l={16} $r={17} />
            <svg width="34" height="34" viewBox="0 0 34 34"><path d="M0 0h34v34H0zM14 4v26h16V4z" fillRule="evenodd" fill="#a5cdf6" /><path d="M14 4h16v26H14z" fill="#0e1f38" /></svg>
            <Gap $w={15} />
            <svg width="34" height="34" viewBox="0 0 34 34"><path d="M0 0h15v15H0zM19 0h15v15H19zM0 19h15v15H0zM19 19h15v15H19z" fill="#fff" /></svg>
            <Divider $l={17} $r={16} />
            <svg width="34" height="34" viewBox="0 0 34 34"><path d="M17 0v34M0 17h34" stroke="#fff" strokeWidth="4" /></svg>
          </ToolSide>
          {centerTools[0].map((t, i) => <ToolCell key={i}>{t}</ToolCell>)}
          <Divider $l={7} $r={8} />
          <Gap $w={1} />
          {centerTools[1].map((t, i) => <ToolCell key={i}>{t}</ToolCell>)}
          <Divider $l={6} $r={12} />
          {centerTools[2].map((t, i) => <ToolCell key={i}>{t}</ToolCell>)}
          <Gap $w={671} />
          <QuickAdd><Lens s={28} c="#fff" w={3.5} />Quick Add</QuickAdd>
          <Gap $w={12} />
          <svg width="34" height="34" viewBox="0 0 34 34"><rect width="34" height="34" rx="2" fill="#a5cdf6" /><rect x="5" y="6" width="10" height="9" fill="#1a2c48" /><circle cx="24" cy="11" r="4" fill="none" stroke="#1a2c48" strokeWidth="3" /><path d="M5 20q5 9 17 5" fill="none" stroke="#1a2c48" strokeWidth="4" /><path d="M20 27L30 19v10H18z" fill="#1a2c48" /></svg>
          <Divider $l={14} $r={11} />
          <svg width="38" height="38" viewBox="0 0 38 38"><circle cx="19" cy="19" r="18.500" fill="#a5cdf6" /><path d="M15 6h7v6h-7zM14 15h9v12h2v4H14z" fill="#16243a" /></svg>
          <Gap $w={14} />
          <svg width="31" height="34" viewBox="0 0 31 34"><rect x="2" y="2" width="27" height="30" fill="none" stroke="#fff" strokeWidth="4" /><path d="M8 10h15M8 17h15M8 24h15" stroke="#fff" strokeWidth="3" /></svg>
          <Divider $l={16} $r={17} />
          <svg width="34" height="34" viewBox="0 0 34 34"><path d="M0 0h34v26H0zM0 29h34v5H0z" fill="#fff" /><path d="M12 6l12 7-12 7z" fill="#222" /></svg>
        </ToolRow>
      </DarkBar>

      <TabBar>
        {tabs.map(([t, w]) => <Tab key={t} $w={w} $on={t === "Text"}>{t}</Tab>)}
      </TabBar>

      <Library>
        <Shelf>
          {library.map((it) => (
            <Item key={it.label} $on={it.on}>
              <Preview>{it.view}</Preview>
              <ItemLabel>{it.label}</ItemLabel>
            </Item>
          ))}
        </Shelf>
        <ShelfScroll>
          <Arrow d="l" w={8} h={16} />
          <ShelfThumb />
          <Arrow d="r" w={8} h={14} />
        </ShelfScroll>
      </Library>

      <Workspace>
        <Sidebar>
          <PanelHead $pad={24} $size={21.5}>
            <HeadTitle>Mockups</HeadTitle>
            <svg width="22" height="24"><rect x="1.500" y="1.500" width="19" height="21" fill="none" stroke="#333" strokeWidth="2.500" /></svg>
            <Gap $w={17} />
            <svg width="20" height="24"><path d="M0 3h20M0 12h20M0 21h20" stroke="#86bfe6" strokeWidth="2.500" /></svg>
          </PanelHead>
          <MockupList>
            {mockups.map((m) => <MockupRow key={m} $on={m === "创建主题"}>{m}</MockupRow>)}
          </MockupList>
        </Sidebar>

        <CanvasColumn>
          <CanvasRow>
            <Canvas>
              <CutEdge $x={270} />
              <CutEdge $x={773} />
              <CutEdge $x={1275} />
              {brokers.map((b, i) => (
                <Broker key={i} $x={b.x} $y={b.y}>
                  <BrokerTitle>Broker-{b.n}</BrokerTitle>
                  {b.parts.map((p, j) => <PartBox key={j} p={p} />)}
                </Broker>
              ))}
            </Canvas>
            <VTrack>
              <Arrow d="u" w={15} h={8} />
              <VThumb />
              <Arrow d="d" w={15} h={9} />
            </VTrack>
          </CanvasRow>
          <HTrack>
            <Arrow d="l" w={8} h={15} />
            <HThumb />
            <Arrow d="r" w={8} h={14} />
            <Corner />
          </HTrack>
        </CanvasColumn>

        <Inspector>
          <PanelHead $pad={23} $size={27}><HeadTitleCjk>创建主题</HeadTitleCjk></PanelHead>
          <Notes>
            <span>Notes</span>
            <span>Click here to edit notes.</span>
          </Notes>
          <Alternates>
            <AltHead>
              Alternate Versions
              <Help>?</Help>
              <svg width="28" height="28"><path d="M14 0v28M0 14h28" stroke="#444" strokeWidth="2.500" /></svg>
            </AltHead>
            Click the '+' to create an alternate<br />version of this mockup.
          </Alternates>
        </Inspector>
      </Workspace>

      <Taskbar>
        {taskIcons.map((ic, i) => (
          <Task key={i} $on={i === 11}>
            {ic}
            <RunMark $w={running[i] ?? 0} />
          </Task>
        ))}
        <Tray>
          <svg width="26" height="16"><path d="M2 14L13 3l11 11" fill="none" stroke="#222" strokeWidth="2.500" /></svg>
          <Gap $w={16} />
          <svg width="31" height="31" viewBox="0 0 31 31"><circle cx="15.500" cy="15.500" r="12" fill="#f3e53a" stroke="#f3d82e" strokeWidth="6" /><path d="M5 8a13 13 0 0 1 18-3M26 23a13 13 0 0 1-18 3" stroke="#2d9a3f" strokeWidth="5" fill="none" /><path d="M15.500 10v11M10 15.500h11" stroke="#2d9a3f" strokeWidth="3" /></svg>
          <Gap $w={18} />
          <svg width="22" height="31" viewBox="0 0 22 31"><rect x="4" width="14" height="20" rx="3" fill="#000" /><path d="M1 14v6q2 5 10 5t10-5v-6M11 25v4M4 30h14" stroke="#444" strokeWidth="2" fill="none" /></svg>
          <Gap $w={20} />
          <svg width="26" height="26" viewBox="0 0 26 26" fill="none" stroke="#444" strokeWidth="1.800"><path d="M2 25Q2 4 24 2M8 25Q8 10 24 8M13 25q0-10 11-11M18 25q0-6 6-6" /><circle cx="22" cy="23" r="2" fill="#111" /></svg>
          <Gap $w={15} />
          <svg width="30" height="26" viewBox="0 0 30 26" fill="none" stroke="#333" strokeWidth="1.800"><path d="M1 8h4l7-6v22l-7-6H1z" /><path d="M16 9q3 4 0 8M20 6q6 7 0 14" /><path d="M24 3q8 10 0 20" stroke="#99a" /></svg>
          <Gap $w={12} />
          <TrayText $s={29} $w={29}>英</TrayText>
          <TrayText $s={23} $w={58}>10:50</TrayText>
          <Gap $w={11} />
          <svg width="32" height="32" viewBox="0 0 32 32"><path d="M0 1h32v25H20l-4 5-4-5H0z" fill="#000" /><path d="M6 8h20M6 14h20M6 20h12" stroke="#dbe4ec" strokeWidth="2" /></svg>
        </Tray>
      </Taskbar>

      <Floating $x={2083} $y={1306}>
        <svg width="16" height="28" viewBox="0 0 16 28"><path d="M1 1v24l5-5 9-4z" fill="#222" stroke="#fff" strokeWidth="1.500" /></svg>
      </Floating>
      <Tooltip $x={2109} $y={1350}>double-click to edit</Tooltip>

      <Uploader $x={2359} $y={206}>尚硅谷</Uploader>
      <SiteMark $x={2540} $y={174}>bilibili</SiteMark>
      <Drawer $x={2780} $y={227} />

      <Caption $x={800} $y={1658}>
        并且又再次的梳理了一下主题副本
        <AiTag>AI</AiTag>
      </Caption>
      <Viewers $x={82} $y={1799}>
        <svg width="27" height="24" viewBox="0 0 27 24" fill="none" stroke="#5c5c5c" strokeWidth="1.800"><path d="M1 23q1-4 5-6-4-3-4-8 0-7 7-7t7 7q0 5-4 8 4 2 5 6M19 3q5 2 4 8 0 3-2 5 4 2 5 6" /></svg>
        1人正在看
      </Viewers>
    </Stage>
  );
}
